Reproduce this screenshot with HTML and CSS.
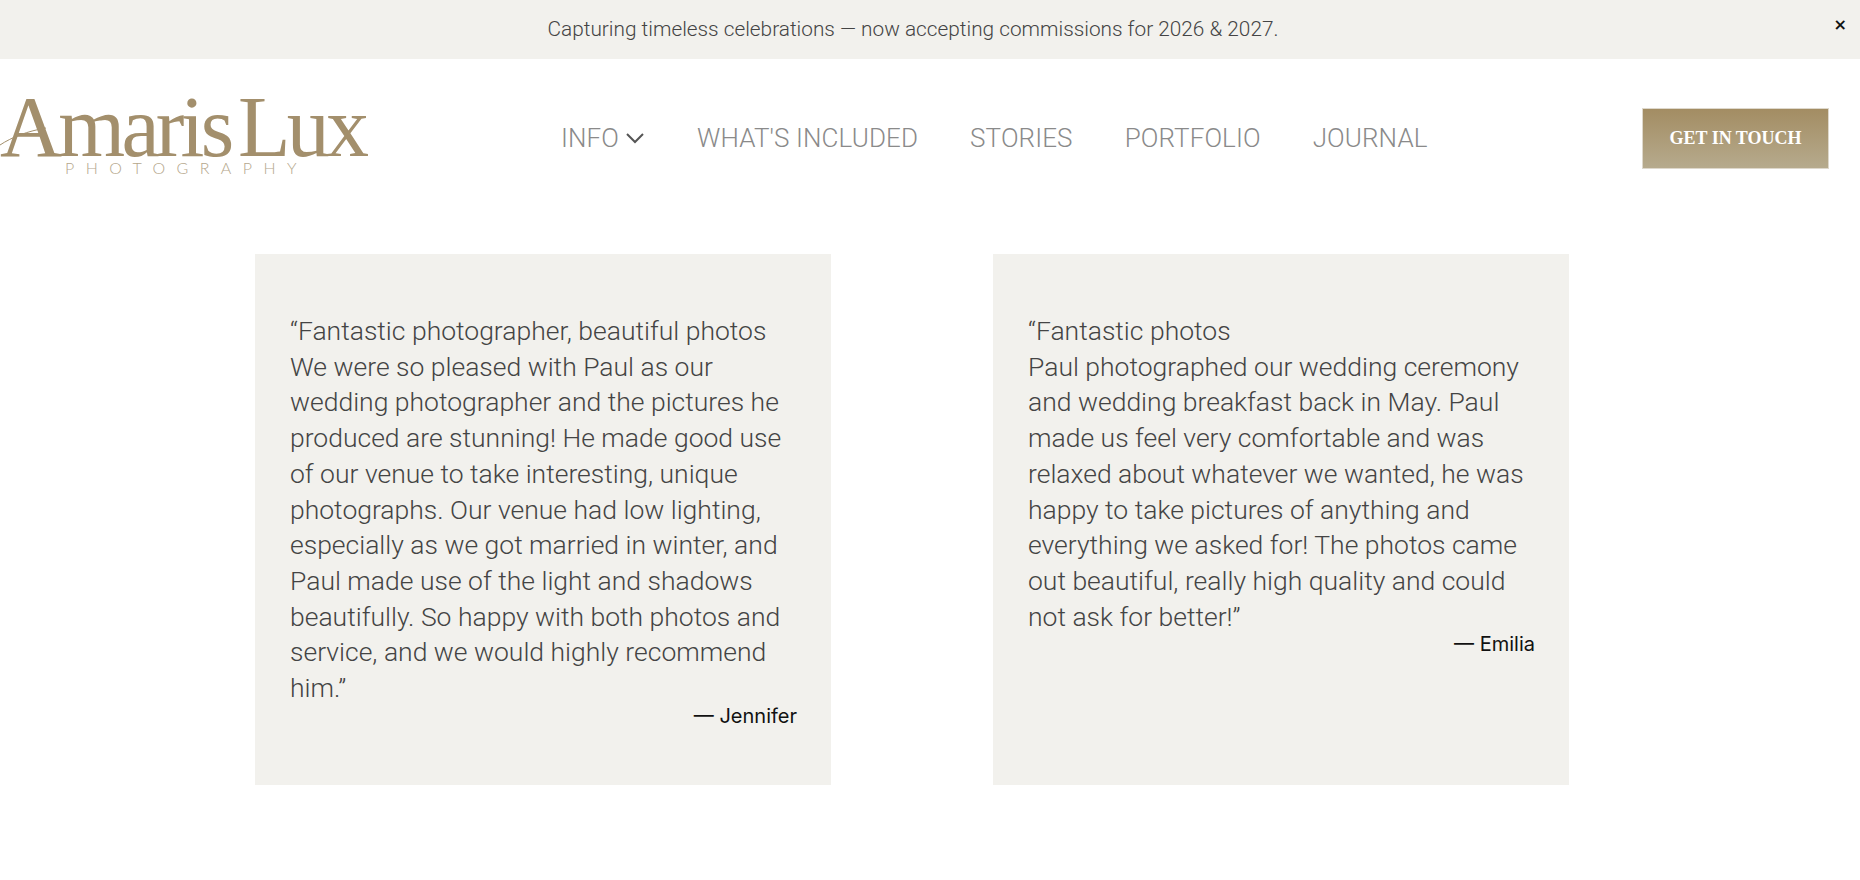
FILE: index.html
```html
<!DOCTYPE html>
<html>
<head>
	<meta charset='utf-8'/>
	<title>Amaris Lux Photography</title>
	<link rel="stylesheet" href="styles.css">
</head>
<body>
	<div class="banner">
		<p class="banner_text">Capturing timeless celebrations — now accepting commissions for 2026 &amp; 2027.</p>
		<span class="banner_close">×</span>
	</div>
	<div class="header">
		<a class="logo" href="#">
			<span class="logo_name">Amaris Lux</span>
			<span class="logo_sub">PHOTOGRAPHY</span>
			<svg class="logo_swash" width="70" height="88" viewBox="0 0 70 88"><path d="M0 51C12 43 28 37 46 34" fill="none" stroke="#a38f6c" stroke-width="1"/></svg>
		</a>
		<ul class="nav">
			<li><a href="#">INFO</a><svg class="nav_arrow" width="20" height="12" viewBox="0 0 20 12"><path d="M2 2L10 10L18 2" fill="none" stroke="#555" stroke-width="2"/></svg></li>
			<li><a href="#">WHAT'S INCLUDED</a></li>
			<li><a href="#">STORIES</a></li>
			<li><a href="#">PORTFOLIO</a></li>
			<li><a href="#">JOURNAL</a></li>
		</ul>
		<a class="btn" href="#">GET IN TOUCH</a>
	</div>
	<div class="reviews">
		<div class="card">
			<p class="card_text">“Fantastic photographer, beautiful photos<br>We were so pleased with Paul as our wedding photographer and the pictures he produced are stunning! He made good use of our venue to take interesting, unique photographs. Our venue had low lighting, especially as we got married in winter, and Paul made use of the light and shadows beautifully. So happy with both photos and service, and we would highly recommend him.”</p>
			<p class="card_author">— Jennifer</p>
		</div>
		<div class="card">
			<p class="card_text">“Fantastic photos<br>Paul photographed our wedding ceremony and wedding breakfast back in May. Paul made us feel very comfortable and was relaxed about whatever we wanted, he was happy to take pictures of anything and everything we asked for! The photos came out beautiful, really high quality and could not ask for better!”</p>
			<p class="card_author">— Emilia</p>
		</div>
	</div>
</body>
</html>
```

FILE: styles.css
```css
*{
	margin: 0;
	padding: 0;
	box-sizing: border-box;
}
body{
	background: #fff;
	font-family: "Roboto", "Liberation Sans", sans-serif;
	font-weight: 300;
}
a{
	text-decoration: none;
	color: inherit;
}
ul,li{
	list-style: none;
}
.banner{
	height: 59px;
	background: #f2f1ed;
	display: flex;
	justify-content: center;
	align-items: center;
	position: relative;
	padding-right: 34px;
	padding-bottom: 1px;
}
.banner_text{
	font-size: 20.8px;
	color: #444;
}
.banner_close{
	position: absolute;
	right: 13px;
	top: 12px;
	font-family: "DejaVu Sans", sans-serif;
	font-weight: bold;
	font-size: 16px;
	line-height: 25px;
	color: #111;
}
.header{
	height: 158px;
	display: flex;
	align-items: center;
	padding-right: 31px;
}
.logo{
	width: 369px;
	height: 88px;
	display: flex;
	flex-direction: column;
	align-items: flex-start;
	position: relative;
	color: #a38f6c;
}
.logo_name{
	font-family: "Liberation Serif", serif;
	font-weight: 400;
	font-size: 86px;
	line-height: 66px;
	letter-spacing: -3.8px;
	word-spacing: -10px;
	white-space: nowrap;
}
.logo_sub{
	font-family: "Lato", sans-serif;
	font-size: 16px;
	line-height: 16px;
	letter-spacing: 11.4px;
	margin-left: 65px;
	color: #b5a78c;
}
.logo_swash{
	position: absolute;
	left: 0;
	top: 0;
}
.nav{
	display: flex;
	gap: 52px;
	margin-left: 192px;
	margin-right: auto;
	font-size: 26px;
	letter-spacing: 0.1px;
	color: #8a8a8a;
}
.nav li{
	display: flex;
	align-items: center;
	gap: 6px;
}
.btn{
	width: 187px;
	height: 61px;
	display: flex;
	justify-content: center;
	align-items: center;
	background: linear-gradient(#a38d63, #b6aa8d);
	border: 1px solid #ded8cc;
	font-family: "Liberation Serif", serif;
	font-weight: bold;
	font-size: 18px;
	color: #fff;
}
.reviews{
	display: flex;
	gap: 162px;
	padding-left: 255px;
	margin-top: 37px;
}
.card{
	width: 576px;
	height: 531px;
	background: #f2f1ed;
	padding: 59px 34px 0 35px;
}
.card_text{
	font-size: 26.5px;
	line-height: 35.7px;
	color: #444;
}
.card_author{
	font-family: "Inter", sans-serif;
	font-weight: 400;
	font-size: 20px;
	line-height: 19px;
	margin-top: 1px;
	text-align: right;
	color: #111;
}
```
